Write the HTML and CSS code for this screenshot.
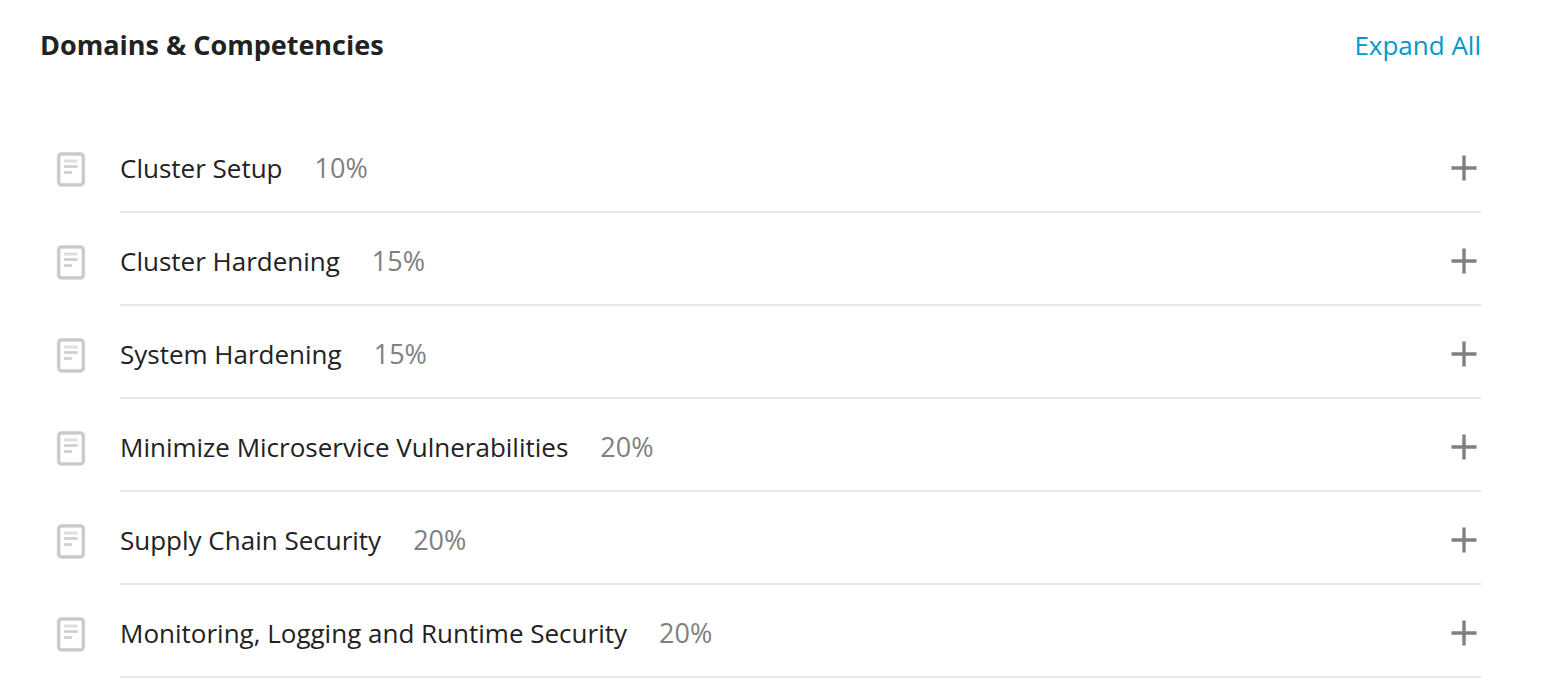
FILE: index.html
```html
<!DOCTYPE html>
<html lang="en">
<head>
<meta charset="utf-8">
<title>Domains &amp; Competencies</title>
<link rel="stylesheet" href="styles.css">
</head>
<body>
<svg class="sprite" aria-hidden="true">
  <symbol id="doc" viewBox="0 0 30 36">
    <rect x="2.7" y="2.9" width="24.6" height="31" rx="3" fill="#fff" stroke="#e4e4e4" stroke-width="4"/>
    <rect x="2.7" y="2.9" width="24.6" height="31" rx="3" fill="none" stroke="#c9c9c9" stroke-width="2.6"/>
    <path d="M8 10h13.5M8 15.5h13.5M8 21.5h8" fill="none" stroke="#dedede" stroke-width="3.2"/>
    <path d="M8 15.5h13.5M8 21.5h7.5" fill="none" stroke="#cecece" stroke-width="1.8"/>
  </symbol>
  <symbol id="plus" viewBox="0 0 26 26">
    <path d="M13 .5v25M.5 13h25" fill="none" stroke="#808080" stroke-width="3.4"/>
  </symbol>
</svg>
<main class="domains">
  <header class="header">
    <h1 class="title">Domains &amp; Competencies</h1>
    <button class="expand" type="button">Expand All</button>
  </header>
  <ul class="list">
    <li class="item"><svg class="doc" aria-hidden="true"><use href="#doc"/></svg><button class="row" type="button" aria-expanded="false"><span class="name">Cluster Setup</span><span class="weight">10%</span><svg class="plus" aria-hidden="true"><use href="#plus"/></svg></button></li>
    <li class="item"><svg class="doc" aria-hidden="true"><use href="#doc"/></svg><button class="row" type="button" aria-expanded="false"><span class="name">Cluster Hardening</span><span class="weight">15%</span><svg class="plus" aria-hidden="true"><use href="#plus"/></svg></button></li>
    <li class="item"><svg class="doc" aria-hidden="true"><use href="#doc"/></svg><button class="row" type="button" aria-expanded="false"><span class="name">System Hardening</span><span class="weight">15%</span><svg class="plus" aria-hidden="true"><use href="#plus"/></svg></button></li>
    <li class="item"><svg class="doc" aria-hidden="true"><use href="#doc"/></svg><button class="row" type="button" aria-expanded="false"><span class="name">Minimize Microservice Vulnerabilities</span><span class="weight">20%</span><svg class="plus" aria-hidden="true"><use href="#plus"/></svg></button></li>
    <li class="item"><svg class="doc" aria-hidden="true"><use href="#doc"/></svg><button class="row" type="button" aria-expanded="false"><span class="name">Supply Chain Security</span><span class="weight">20%</span><svg class="plus" aria-hidden="true"><use href="#plus"/></svg></button></li>
    <li class="item"><svg class="doc" aria-hidden="true"><use href="#doc"/></svg><button class="row" type="button" aria-expanded="false"><span class="name">Monitoring, Logging and Runtime Security</span><span class="weight">20%</span><svg class="plus" aria-hidden="true"><use href="#plus"/></svg></button></li>
  </ul>
</main>
</body>
</html>
```
FILE: styles.css
```css
* { box-sizing: border-box; }
body { margin: 0; background: #fff; color: #222; font: 26px/40px "Open Sans", sans-serif; }
button { border: 0; padding: 0; background: none; font: inherit; color: inherit; cursor: pointer; }
.sprite { position: absolute; width: 0; height: 0; }
.domains { padding: 25px 61px 20px 40px; }
.header { display: flex; justify-content: space-between; align-items: center; margin-bottom: 55px; }
.title { margin: 0; font-size: 27px; font-weight: 700; }
.expand { color: #0099cc; }
.list { margin: 0; padding: 0; list-style: none; }
.item { display: flex; align-items: flex-start; }
.doc { width: 30px; height: 36px; margin: 31px 34px 0 16px; flex: none; }
.row { flex: 1; display: flex; align-items: center; gap: 32px; padding: 28px 4px 23px 0; border-bottom: 2px solid #e8e8e8; text-align: left; }
.weight { color: #808080; font-size: 27px; }
.plus { width: 26px; height: 26px; margin-left: auto; }
```
